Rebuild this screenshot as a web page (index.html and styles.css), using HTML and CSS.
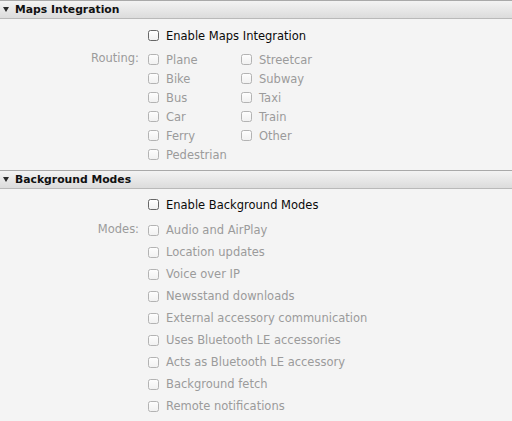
FILE: index.html
```html
<!DOCTYPE html>
<html>
<head>
<meta charset="utf-8">
<link rel="stylesheet" href="styles.css">
</head>
<body>
<section class="section">
  <div class="header"><span class="tri"></span><span class="title">Maps Integration</span></div>
  <div class="body body-maps">
    <div class="row enable"><span class="label"></span><span class="check on"></span><span class="text on">Enable Maps Integration</span></div>
    <div class="group">
      <span class="label group-label">Routing:</span>
      <div class="routing">
        <div class="item"><span class="check"></span><span class="text">Plane</span></div>
        <div class="item"><span class="check"></span><span class="text">Bike</span></div>
        <div class="item"><span class="check"></span><span class="text">Bus</span></div>
        <div class="item"><span class="check"></span><span class="text">Car</span></div>
        <div class="item"><span class="check"></span><span class="text">Ferry</span></div>
        <div class="item"><span class="check"></span><span class="text">Pedestrian</span></div>
        <div class="item"><span class="check"></span><span class="text">Streetcar</span></div>
        <div class="item"><span class="check"></span><span class="text">Subway</span></div>
        <div class="item"><span class="check"></span><span class="text">Taxi</span></div>
        <div class="item"><span class="check"></span><span class="text">Train</span></div>
        <div class="item"><span class="check"></span><span class="text">Other</span></div>
      </div>
    </div>
  </div>
</section>
<section class="section">
  <div class="header"><span class="tri"></span><span class="title">Background Modes</span></div>
  <div class="body body-bg">
    <div class="row enable"><span class="label"></span><span class="check on"></span><span class="text on">Enable Background Modes</span></div>
    <div class="group">
      <span class="label group-label tall">Modes:</span>
      <div class="modes">
        <div class="item tall"><span class="check"></span><span class="text">Audio and AirPlay</span></div>
        <div class="item tall"><span class="check"></span><span class="text">Location updates</span></div>
        <div class="item tall"><span class="check"></span><span class="text">Voice over IP</span></div>
        <div class="item tall"><span class="check"></span><span class="text">Newsstand downloads</span></div>
        <div class="item tall"><span class="check"></span><span class="text">External accessory communication</span></div>
        <div class="item tall"><span class="check"></span><span class="text">Uses Bluetooth LE accessories</span></div>
        <div class="item tall"><span class="check"></span><span class="text">Acts as Bluetooth LE accessory</span></div>
        <div class="item tall"><span class="check"></span><span class="text">Background fetch</span></div>
        <div class="item tall"><span class="check"></span><span class="text">Remote notifications</span></div>
      </div>
    </div>
  </div>
</section>
</body>
</html>
```
FILE: styles.css
```css
html, body {
  margin: 0;
  padding: 0;
  background: #f4f4f4;
}
body {
  width: 512px;
  height: 421px;
  overflow: hidden;
  font-family: "DejaVu Sans", sans-serif;
  font-size: 11.5px;
  color: #9b9b9b;
}
.header {
  height: 17px;
  border-top: 1px solid #a9a9a9;
  border-bottom: 1px solid #b9b9b9;
  background: linear-gradient(#f3f3f3, #dcdcdc);
  display: flex;
  align-items: center;
}
.tri {
  width: 0;
  height: 0;
  margin-left: 3px;
  margin-right: 6px;
  border-left: 3.5px solid transparent;
  border-right: 3.5px solid transparent;
  border-top: 5px solid #2a2a2a;
}
.title {
  font-weight: bold;
  font-size: 10.8px;
  color: #111;
}
.body-maps {
  padding-top: 7px;
  padding-bottom: 6px;
}
.body-bg {
  padding-top: 6px;
}
.row, .item {
  display: flex;
  align-items: center;
  height: 19px;
}
.item.tall {
  height: 22px;
}
.enable {
  margin-bottom: 5px;
}
.label {
  width: 139px;
  margin-right: 9px;
  text-align: right;
  flex: none;
}
.group {
  display: flex;
  align-items: flex-start;
}
.group-label {
  line-height: 19px;
  margin-top: -1px;
}
.group-label.tall {
  line-height: 22px;
}
.routing {
  display: grid;
  grid-template-columns: 93px 93px;
  grid-template-rows: repeat(6, 19px);
  grid-auto-flow: column;
}
.modes {
  display: flex;
  flex-direction: column;
}
.check {
  box-sizing: border-box;
  width: 11px;
  height: 11px;
  border: 1px solid #b3b3b3;
  border-radius: 2.5px;
  background: linear-gradient(#fdfdfd, #f1f1f1);
  flex: none;
  margin-right: 7px;
}
.check.on {
  border-color: #666;
  background: linear-gradient(#ffffff, #f0f0f0);
}
.text.on {
  color: #0a0a0a;
}
```
